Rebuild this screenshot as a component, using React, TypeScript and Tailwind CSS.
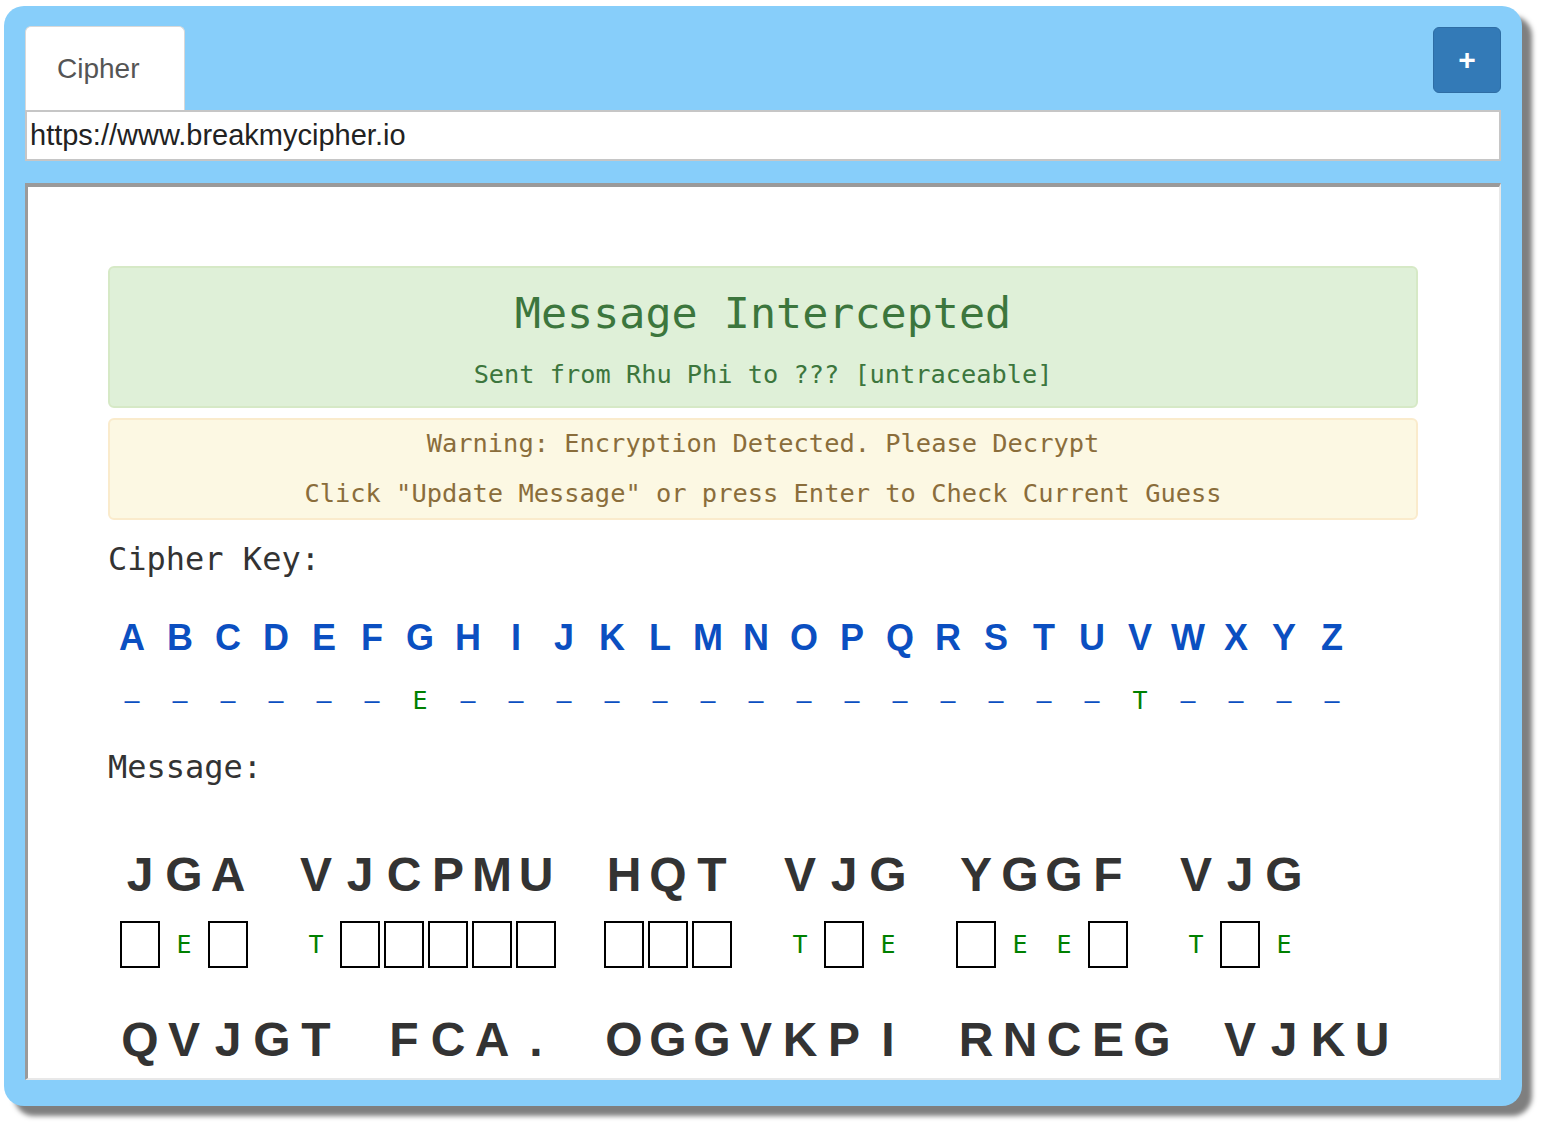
const ALPHABET = 'ABCDEFGHIJKLMNOPQRSTUVWXYZ'.split('')
const KEY: Record<string, string> = { G: 'E', V: 'T' }
const MESSAGE = 'JGA VJCPMU HQT VJG YGGF VJG QVJGT FCA. OGGVKPI RNCEG VJKU'

const mono = "font-['DejaVu_Sans_Mono',monospace]"
const sans = "font-['Liberation_Sans',Arial,sans-serif]"

function Word({ word }: { word: string }) {
  return (
    <div className="flex gap-1">
      {word.split('').map((ch, i) => (
        <div key={i} className="w-10 flex flex-col items-center">
          <div className={`${sans} h-14 leading-[56px] text-[48px] font-bold text-[#333] whitespace-nowrap flex justify-center w-10`}>
            {ch}
          </div>
          <div className="mt-[18px] h-[47px] w-10 flex items-center justify-center">
            {KEY[ch] ? (
              <span className={`${mono} text-[25px] text-[#008000]`}>{KEY[ch]}</span>
            ) : /[A-Z]/.test(ch) ? (
              <div className="w-10 h-[47px] border-2 border-black bg-white" />
            ) : (
              <span className={`${mono} text-[25px] text-[#333]`}>{ch}</span>
            )}
          </div>
        </div>
      ))}
    </div>
  )
}

export default function App() {
  return (
    <div className="min-h-screen bg-white pt-[6px] pl-[4px]">
      <div className="w-[1518px] h-[1100px] bg-[#87cefa] rounded-[20px] shadow-[10px_10px_5px_#7f7f7f] px-[21px] pt-[20px] flex flex-col">
        <div className="h-[84px] flex justify-between">
          <div className={`${sans} w-[160px] h-full bg-white border border-b-0 border-[#d8d8d8] rounded-t-[6px] pl-[31px] flex items-center text-[28px] text-[#555]`}>
            Cipher
          </div>
          <button className={`${sans} mt-px w-[68px] h-[66px] bg-[#337ab7] border border-[#2e6da4] rounded-[6px] text-white text-[30px] font-bold leading-none flex items-center justify-center`}>
            +
          </button>
        </div>

        <div className={`${sans} h-[51px] bg-white border-2 border-[#c6c6c6] pl-[3px] flex items-center text-[29px] text-[#222]`}>
          https://www.breakmycipher.io
        </div>

        <div className="mt-[22px] h-[897px] bg-white border-t-4 border-l-[3px] border-r-2 border-b-2 border-t-[#9a9a9a] border-l-[#9a9a9a] border-r-[#e8e8e8] border-b-[#e8e8e8] overflow-hidden pt-[79px] pl-[80px]">
          <div className="w-[1310px]">
            <div className="bg-[#dff0d8] border-2 border-[#d6e9c6] rounded-[6px] pt-[15px] pb-[6px] text-center text-[#3c763d]">
              <div className={`${mono} text-[43.4px] leading-[60px]`}>Message Intercepted</div>
              <div className={`${mono} text-[25.3px] leading-[50px] mt-[7px]`}>Sent from Rhu Phi to ??? [untraceable]</div>
            </div>

            <div className="mt-[10px] bg-[#fcf8e3] border-2 border-[#faebcc] rounded-[6px] text-center text-[#8a6d3b]">
              <div className={`${mono} text-[25.4px] leading-[50px] -mt-[2px]`}>Warning: Encryption Detected. Please Decrypt</div>
              <div className={`${mono} text-[25.4px] leading-[50px]`}>Click "Update Message" or press Enter to Check Current Guess</div>
            </div>

            <div className={`${mono} mt-[19px] text-[32px] leading-[40px] text-[#333]`}>Cipher Key:</div>

            <div className={`${sans} mt-[35px] flex h-12 text-[36px] leading-[48px] font-bold text-[#0b4fc1]`}>
              {ALPHABET.map((l) => (
                <div key={l} className="w-12 text-center">{l}</div>
              ))}
            </div>

            <div className={`${mono} mt-[19px] flex h-10 text-[25px] leading-[40px]`}>
              {ALPHABET.map((l) => (
                <div key={l} className={`w-12 text-center ${KEY[l] ? 'text-[#008000]' : 'text-[#0b4fc1]'}`}>
                  {KEY[l] ?? '–'}
                </div>
              ))}
            </div>

            <div className={`${mono} mt-[26px] text-[32px] leading-[40px] text-[#333]`}>Message:</div>

            <div className="mt-[60px] pl-3 flex flex-wrap gap-x-12 gap-y-[44px]">
              {MESSAGE.split(' ').map((w, i) => (
                <Word key={i} word={w} />
              ))}
            </div>
          </div>
        </div>
      </div>
    </div>
  )
}
